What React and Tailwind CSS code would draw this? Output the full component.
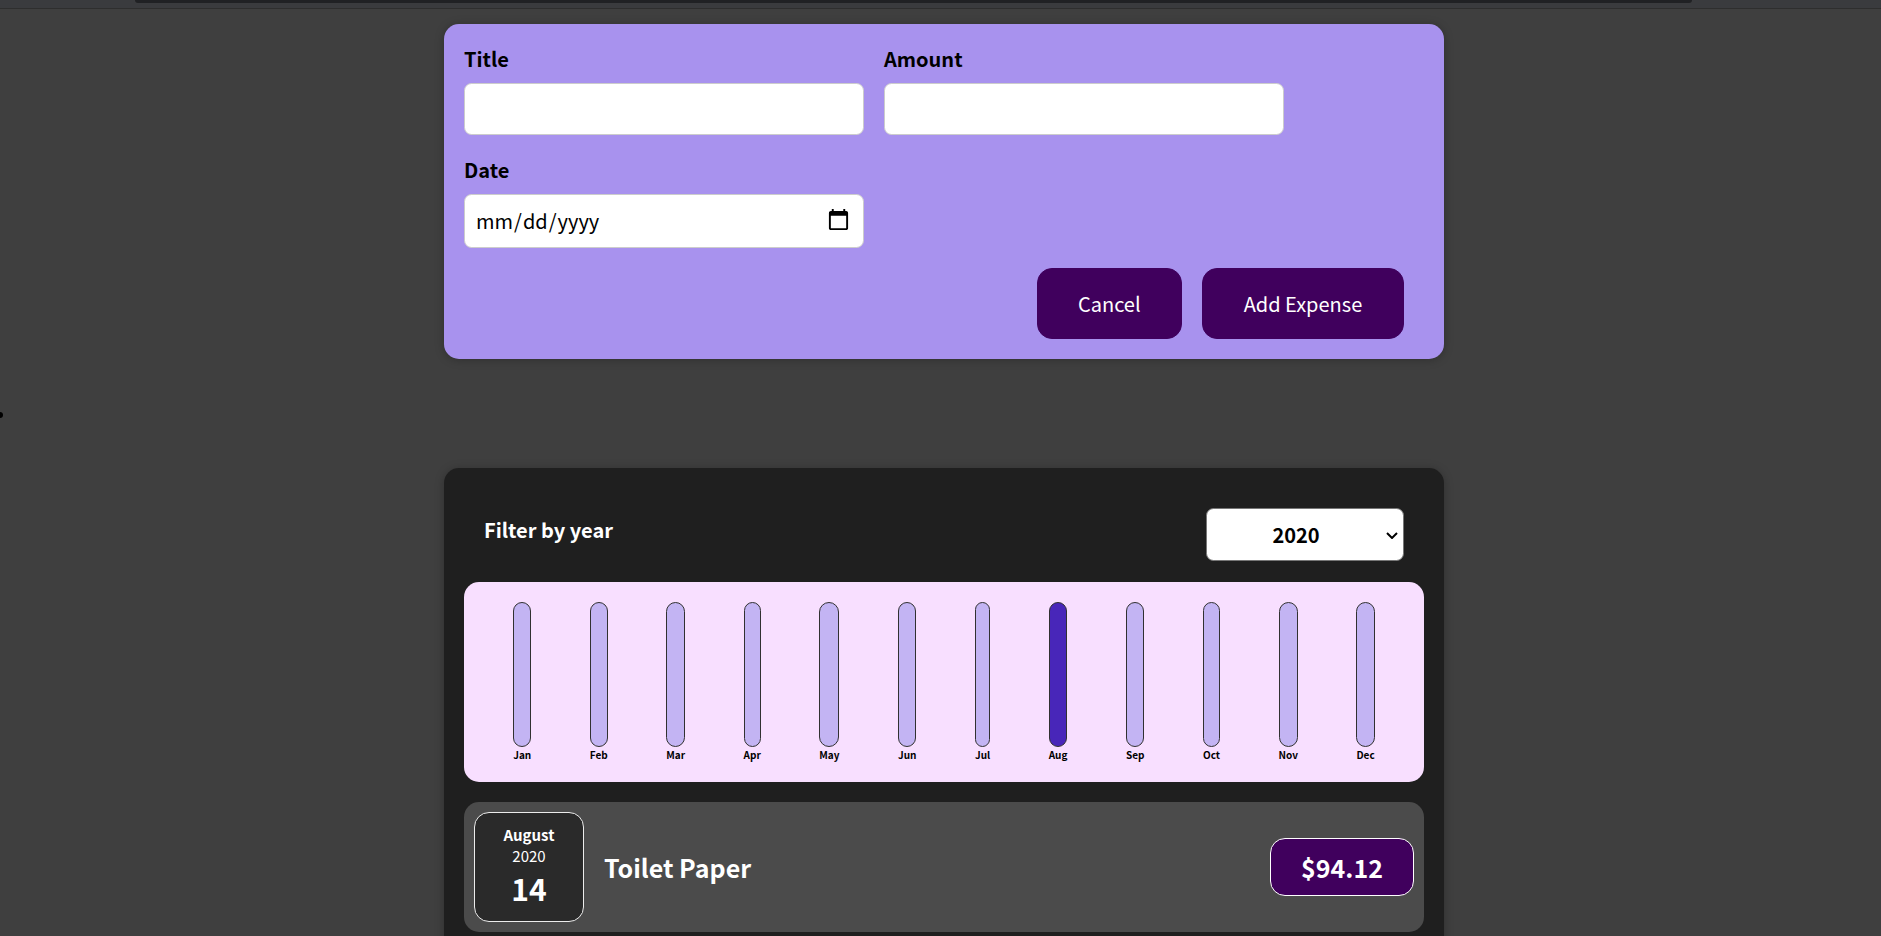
const months = ['Jan', 'Feb', 'Mar', 'Apr', 'May', 'Jun', 'Jul', 'Aug', 'Sep', 'Oct', 'Nov', 'Dec'];

function ChartBar({ label, active }) {
  return (
    <div className="flex h-full flex-col items-center">
      <div
        className={`w-full flex-1 rounded-[15px] border-[1.25px] border-[#313131] ${active ? 'bg-[#4826b9]' : 'bg-[#c3b4f3]'}`}
      ></div>
      <div className="text-center text-[10px] font-bold text-black">{label}</div>
    </div>
  );
}

function ExpenseForm() {
  return (
    <form className="ml-[444px] w-[1000px] rounded-[15px] bg-[#a892ee] p-5 shadow-[0_1px_10px_rgba(0,0,0,0.25)]">
      <div className="mb-5 flex flex-wrap gap-5">
        <div>
          <label className="mb-2.5 block font-bold text-black">Title</label>
          <input type="text" className="block h-[52px] w-[400px] rounded-[7.5px] border-[1.25px] border-[#cccccc] bg-white p-2.5" />
        </div>
        <div>
          <label className="mb-2.5 block font-bold text-black">Amount</label>
          <input type="number" className="block h-[52px] w-[400px] rounded-[7.5px] border-[1.25px] border-[#cccccc] bg-white p-2.5" />
        </div>
        <div>
          <label className="mb-2.5 block font-bold text-black">Date</label>
          <input
            type="date"
            className="block h-[54px] w-[400px] rounded-[7.5px] border-[1.25px] border-[#cccccc] bg-white px-2.5 pb-3 pt-2.5 text-black [&::-webkit-calendar-picker-indicator]:h-[25px] [&::-webkit-calendar-picker-indicator]:w-[25px]"
          />
        </div>
      </div>
      <div className="flex justify-end gap-5 pr-5">
        <button type="button" className="rounded-[15px] border-[1.25px] border-[#40005d] bg-[#40005d] px-[40.25px] py-5 text-white">Cancel</button>
        <button type="submit" className="rounded-[15px] border-[1.25px] border-[#40005d] bg-[#40005d] px-[40.75px] py-5 text-white">Add Expense</button>
      </div>
    </form>
  );
}

function ExpenseItem() {
  return (
    <div className="my-5 flex items-center justify-between rounded-[15px] bg-[#4b4b4b] p-2.5">
      <div className="flex items-center gap-5">
        <div className="flex h-[110px] w-[110px] flex-col items-center justify-center rounded-[15px] border-[1.25px] border-[#ececec] bg-[#2a2a2a] text-white">
          <div className="text-[15px] font-bold">August</div>
          <div className="text-[15px]">2020</div>
          <div className="text-[30px] font-bold">14</div>
        </div>
        <h2 className="text-[25px] font-bold text-white">Toilet Paper</h2>
      </div>
      <div className="rounded-[15px] border-[1.25px] border-white bg-[#40005d] px-[30px] py-2.5 text-[25px] font-bold text-white">$94.12</div>
    </div>
  );
}

export default function App() {
  return (
    <div className="h-[936px] overflow-hidden bg-[#3f3f3f] text-[20px] leading-[normal] font-['Noto_Sans_CJK_JP',sans-serif]">
      {/* leftover of the browser's top bar */}
      <div className="h-[9px] border-b border-[#2e2e2e] bg-[#3a3b3e] pl-[135px] pr-[189px]">
        <div className="h-[3px] rounded-b-md bg-[#202124]"></div>
      </div>
      <div className="h-[15px]"></div>
      <ExpenseForm />
      <div className="absolute left-0 top-[412px] h-[6px] w-[3px] rounded-r-full bg-black"></div>
      <div className="ml-[444px] mt-[109px] w-[1000px] rounded-[15px] bg-[#1f1f1f] p-5 shadow-[0_1px_10px_rgba(0,0,0,0.25)]">
        <div className="mb-[21px] mt-5 flex items-center justify-between px-5 text-white">
          <label className="mb-2.5 font-bold">Filter by year</label>
          <div className="relative">
            <select className="block h-[53px] w-[198px] appearance-none rounded-[7.5px] border-[1.25px] border-[#777] bg-white py-2.5 pr-[18px] text-center font-bold text-black">
              <option>2020</option>
            </select>
            <svg className="pointer-events-none absolute left-[180px] top-[24px] h-[7px] w-[12px]" viewBox="0 0 12 7" fill="none">
              <path d="M1 1l5 5 5-5" stroke="#000" strokeWidth="2" />
            </svg>
          </div>
        </div>
        <div className="flex h-[200px] justify-around rounded-[15px] bg-[#f8dfff] p-5">
          {months.map((m) => (
            <ChartBar key={m} label={m} active={m === 'Aug'} />
          ))}
        </div>
        <ExpenseItem />
      </div>
    </div>
  );
}
